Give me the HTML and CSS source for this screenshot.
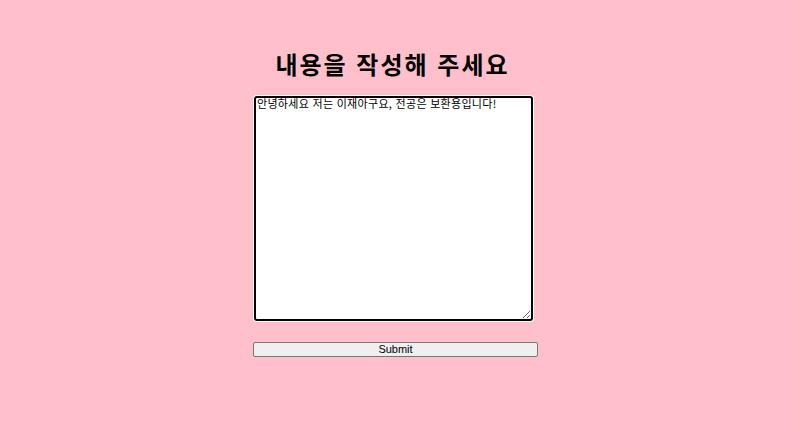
FILE: index.html
```html
<!DOCTYPE html>
<html lang="ko">
<head>
<meta charset="utf-8">
<link rel="stylesheet" href="styles.css">
</head>
<body>
<main class="page">
  <h1 class="title">내용을 작성해 주세요</h1>
  <form class="form">
    <textarea class="content">안녕하세요 저는 이재아구요, 전공은 보환용입니다!</textarea>
    <button type="button" class="submit">Submit</button>
  </form>
</main>
</body>
</html>
```
FILE: styles.css
```css
html, body {
  margin: 0;
  padding: 0;
  background: #ffc0cb;
  height: 100%;
}
.page {
  display: flex;
  flex-direction: column;
  align-items: center;
  padding-top: 46px;
  font-family: "Noto Sans CJK KR", "Noto Sans", sans-serif;
}
.title {
  margin: 0 5px 0 0;
  font-size: 24px;
  font-weight: bold;
  line-height: 36px;
  letter-spacing: 2px;
  color: #000;
}
.form {
  display: flex;
  flex-direction: column;
  align-items: flex-start;
  margin-top: 14px;
  width: 285px;
  margin-left: 1px;
}
.content {
  box-sizing: border-box;
  width: 279px;
  height: 225px;
  margin-left: 1px;
  border: 2px solid #000;
  border-radius: 3px;
  box-shadow: 0 0 0 1px #fff;
  outline: none;
  padding: 0 1px;
  font-family: "Noto Sans CJK KR", sans-serif;
  font-size: 11px;
  line-height: 11px;
  letter-spacing: 0.3px;
  color: #000;
  background: #fff;
  resize: both;
}
.submit {
  box-sizing: border-box;
  margin-top: 21px;
  width: 285px;
  height: 15px;
  padding: 0;
  border: 1px solid #767676;
  border-radius: 2px;
  background: #efefef;
  font-family: "Liberation Sans", Arial, sans-serif;
  font-size: 11px;
  line-height: 13px;
  color: #000;
}
```
